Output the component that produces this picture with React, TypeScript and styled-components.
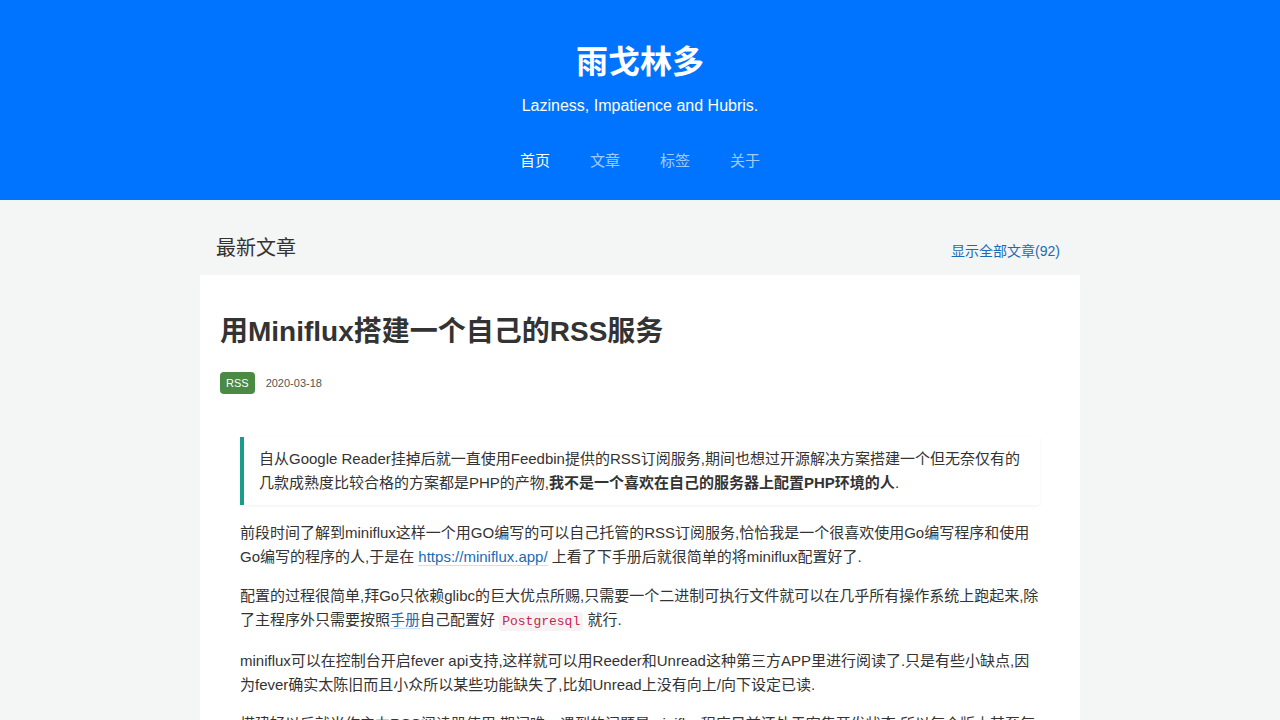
import React from "react";
import styled, { createGlobalStyle } from "styled-components";

const GlobalStyle = createGlobalStyle`
  html, body {
    margin: 0;
    padding: 0;
    background: #f4f5f5;
    font-family: "Liberation Sans", Arial, "Noto Sans CJK SC", sans-serif;
    color: #333;
  }
`;

const Header = styled.header`
  background: #0074ff;
  height: 200px;
  box-sizing: border-box;
  padding-top: 40px;
  display: flex;
  flex-direction: column;
  align-items: center;
  color: #fff;
`;

const SiteTitle = styled.h1`
  margin: 0;
  font-size: 32px;
  line-height: 44px;
  font-weight: bold;
`;

const Subtitle = styled.p`
  margin: 11px 0 0;
  font-size: 16px;
  line-height: 22px;
`;

const Nav = styled.nav`
  display: flex;
  gap: 40px;
  margin-top: 33px;
`;

const NavItem = styled.a<{ $active?: boolean }>`
  font-size: 15px;
  line-height: 22px;
  color: ${(p) => (p.$active ? "#fff" : "rgba(255,255,255,0.65)")};
  text-decoration: none;
`;

const Main = styled.main`
  width: 880px;
  margin: 0 auto;
`;

const SectionHead = styled.div`
  display: flex;
  justify-content: space-between;
  align-items: flex-end;
  padding: 35px 20px 14px 16px;
`;

const SectionTitle = styled.h2`
  margin: 0;
  font-size: 20px;
  line-height: 26px;
  font-weight: normal;
  color: #333;
`;

const AllLink = styled.a`
  font-size: 14px;
  line-height: 20px;
  color: #1a6bb5;
  text-decoration: none;
`;

const Card = styled.article`
  background: #fff;
  padding: 39px 20px 20px;
`;

const PostTitle = styled.h3`
  margin: 0;
  font-size: 28px;
  line-height: 36px;
  font-weight: bold;
  color: #333;
`;

const Meta = styled.div`
  display: flex;
  align-items: center;
  gap: 11px;
  margin-top: 22px;
`;

const Tag = styled.span`
  background: #4a8a45;
  color: #fff;
  font-size: 11px;
  line-height: 22px;
  padding: 0 6px;
  border-radius: 4px;
`;

const DateText = styled.span`
  font-size: 11px;
  color: #555;
`;

const Body = styled.div`
  padding: 0 20px;
  margin-top: 43px;
  font-size: 15px;
  line-height: 24px;
  color: #333;
`;

const Quote = styled.blockquote`
  margin: 0 0 16px;
  padding: 10px 15px 10px 15px;
  border-left: 4px solid #1a9c8c;
  box-shadow: 0 1px 3px rgba(0, 0, 0, 0.06);
  border-radius: 0 3px 3px 0;
`;

const Para = styled.p`
  margin: 0 0 15px;
`;

const Link = styled.a`
  color: #1a6bb5;
  text-decoration: none;
  border-bottom: 1px solid #cfe2f3;
`;

const Code = styled.code`
  font-family: "Liberation Mono", "Courier New", monospace;
  font-size: 13px;
  color: #c7254e;
  background: #f7f3f4;
  padding: 2px 3px;
  border-radius: 3px;
`;

const navItems = ["首页", "文章", "标签", "关于"];

export default function App() {
  return (
    <>
      <GlobalStyle />
      <Header>
        <SiteTitle>雨戈林多</SiteTitle>
        <Subtitle>Laziness, Impatience and Hubris.</Subtitle>
        <Nav>
          {navItems.map((item, i) => (
            <NavItem key={item} href="#" $active={i === 0}>
              {item}
            </NavItem>
          ))}
        </Nav>
      </Header>
      <Main>
        <SectionHead>
          <SectionTitle>最新文章</SectionTitle>
          <AllLink href="#">显示全部文章(92)</AllLink>
        </SectionHead>
        <Card>
          <PostTitle>用Miniflux搭建一个自己的RSS服务</PostTitle>
          <Meta>
            <Tag>RSS</Tag>
            <DateText>2020-03-18</DateText>
          </Meta>
          <Body>
            <Quote>
              自从Google Reader挂掉后就一直使用Feedbin提供的RSS订阅服务,期间也想过开源解决方案搭建一个但无奈仅有的几款成熟度比较合格的方案都是PHP的产物,
              <b>我不是一个喜欢在自己的服务器上配置PHP环境的人</b>.
            </Quote>
            <Para>
              前段时间了解到miniflux这样一个用GO编写的可以自己托管的RSS订阅服务,恰恰我是一个很喜欢使用Go编写程序和使用Go编写的程序的人,于是在{" "}
              <Link href="#">https://miniflux.app/</Link> 上看了下手册后就很简单的将miniflux配置好了.
            </Para>
            <Para>
              配置的过程很简单,拜Go只依赖glibc的巨大优点所赐,只需要一个二进制可执行文件就可以在几乎所有操作系统上跑起来,除了主程序外只需要按照
              <Link href="#">手册</Link>自己配置好 <Code>Postgresql</Code> 就行.
            </Para>
            <Para>
              miniflux可以在控制台开启fever api支持,这样就可以用Reeder和Unread这种第三方APP里进行阅读了.只是有些小缺点,因为fever确实太陈旧而且小众所以某些功能缺失了,比如Unread上没有向上/向下设定已读.
            </Para>
            <Para>
              搭建好以后就当作主力RSS阅读器使用,期间唯一遇到的问题是miniflux程序目前还处于密集开发状态,所以每个版本甚至每次更新都可能会有一些变化.
            </Para>
          </Body>
        </Card>
      </Main>
    </>
  );
}
